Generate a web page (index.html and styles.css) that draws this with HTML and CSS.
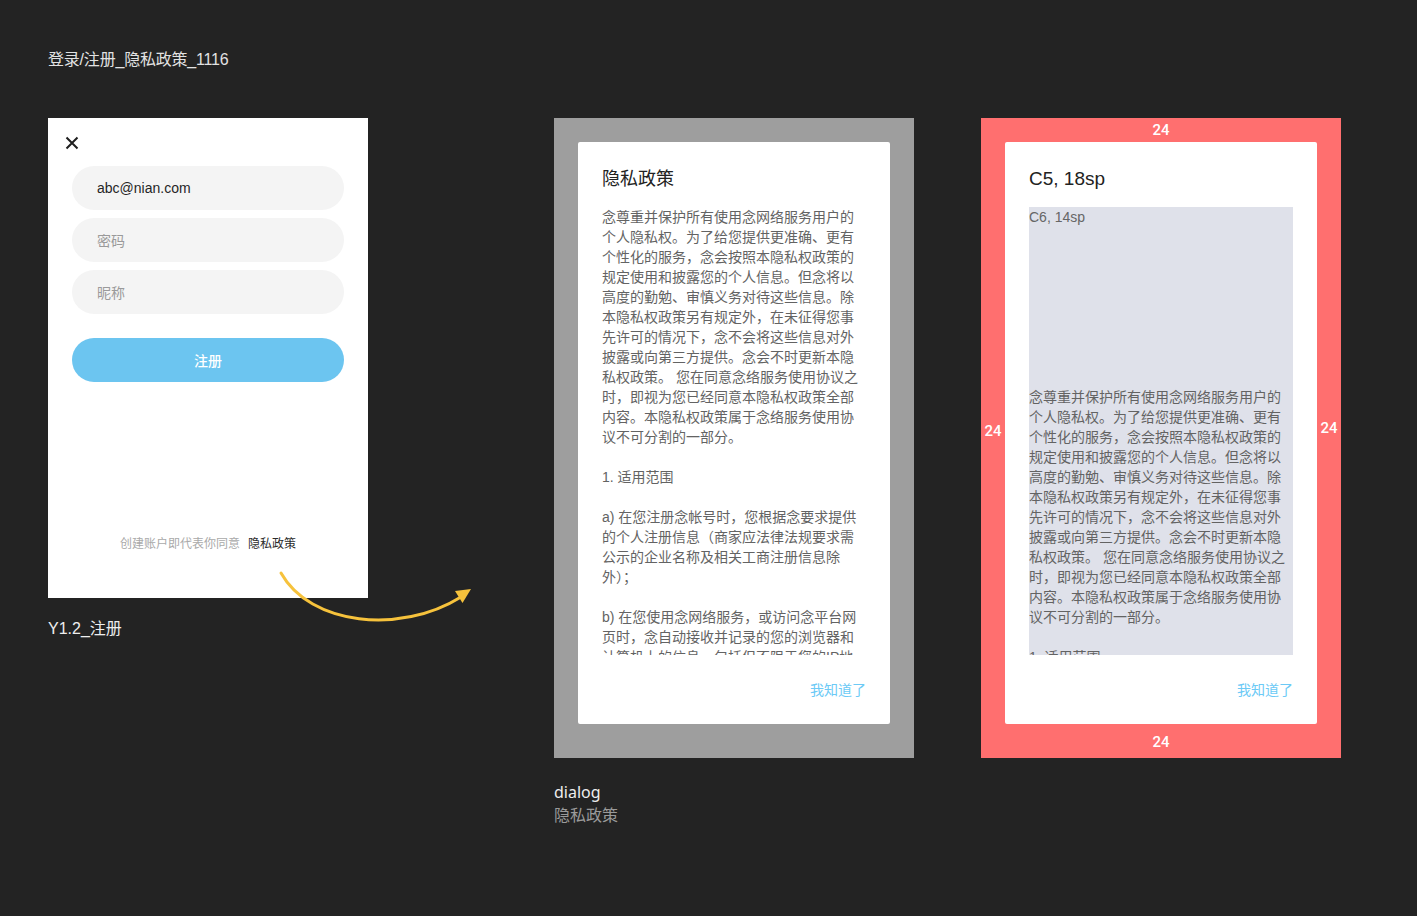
FILE: index.html
```html
<!DOCTYPE html>
<html lang="zh-CN">
<head>
<meta charset="utf-8">
<title>登录/注册_隐私政策_1116</title>
<link rel="stylesheet" href="styles.css">
</head>
<body>
<div class="page">
  <div class="page-title">登录/注册_隐私政策_1116</div>
  <div class="boards">
    <div class="column col-phone">
      <div class="phone">
        <div class="close">
          <svg width="24" height="24" viewBox="0 0 24 24"><path d="M6.5 6.5 L17.5 17.5 M17.5 6.5 L6.5 17.5" stroke="#1f1f1f" stroke-width="2" fill="none"/></svg>
        </div>
        <div class="field field-filled">abc@nian.com</div>
        <div class="field">密码</div>
        <div class="field">昵称</div>
        <div class="btn-primary">注册</div>
        <div class="agree"><span class="agree-muted">创建账户即代表你同意</span><span class="agree-link">隐私政策</span></div>
      </div>
      <div class="board-label">Y1.2_注册</div>
    </div>

    <div class="column col-dialog">
      <div class="frame frame-grey">
        <div class="dialog">
          <div class="dialog-title">隐私政策</div>
          <div class="dialog-body">
            <p>念尊重并保护所有使用念网络服务用户的个人隐私权。为了给您提供更准确、更有个性化的服务，念会按照本隐私权政策的规定使用和披露您的个人信息。但念将以高度的勤勉、审慎义务对待这些信息。除本隐私权政策另有规定外，在未征得您事先许可的情况下，念不会将这些信息对外披露或向第三方提供。念会不时更新本隐私权政策。 您在同意念络服务使用协议之时，即视为您已经同意本隐私权政策全部内容。本隐私权政策属于念络服务使用协议不可分割的一部分。</p>
            <p>1. 适用范围</p>
            <p>a) 在您注册念帐号时，您根据念要求提供的个人注册信息（商家应法律法规要求需公示的企业名称及相关工商注册信息除外）；</p>
            <p>b) 在您使用念网络服务，或访问念平台网页时，念自动接收并记录的您的浏览器和计算机上的信息，包括但不限于您的IP地</p>
          </div>
          <div class="dialog-actions"><span class="dialog-btn">我知道了</span></div>
        </div>
      </div>
      <div class="board-label label-dialog">dialog</div>
      <div class="board-sub">隐私政策</div>
    </div>

    <div class="column col-spec">
      <div class="frame frame-red">
        <div class="spec spec-top">24</div>
        <div class="spec spec-left">24</div>
        <div class="dialog">
          <div class="dialog-title title-latin">C5, 18sp</div>
          <div class="dialog-body body-spec">
            <div class="spec-note">C6, 14sp</div>
            <p class="spec-first">念尊重并保护所有使用念网络服务用户的个人隐私权。为了给您提供更准确、更有个性化的服务，念会按照本隐私权政策的规定使用和披露您的个人信息。但念将以高度的勤勉、审慎义务对待这些信息。除本隐私权政策另有规定外，在未征得您事先许可的情况下，念不会将这些信息对外披露或向第三方提供。念会不时更新本隐私权政策。 您在同意念络服务使用协议之时，即视为您已经同意本隐私权政策全部内容。本隐私权政策属于念络服务使用协议不可分割的一部分。</p>
            <p>1. 适用范围</p>
          </div>
          <div class="dialog-actions"><span class="dialog-btn">我知道了</span></div>
        </div>
        <div class="spec spec-right">24</div>
        <div class="spec spec-bottom">24</div>
      </div>
    </div>
  </div>

  <svg class="flow-arrow" width="220" height="80" viewBox="270 560 220 80">
    <path d="M281 573 C 310 625, 400 635, 461 597" stroke="#f6c23c" stroke-width="3" fill="none" stroke-linecap="round"/>
    <path d="M471 589 L462.5 603 L455 591 Z" fill="#f6c23c"/>
  </svg>
</div>
</body>
</html>
```

FILE: styles.css
```css
* {
  box-sizing: border-box;
}

html, body {
  margin: 0;
  padding: 0;
  background: #232323;
}

body {
  font-family: "Liberation Sans", "Noto Sans CJK SC", sans-serif;
  width: 1417px;
  height: 916px;
  overflow: hidden;
}

.page {
  position: relative;
  padding: 50px 0 0 48px;
  height: 916px;
}

.page-title {
  font-size: 16px;
  line-height: 20px;
  color: #e2e2e2;
  letter-spacing: -0.2px;
}

.boards {
  display: flex;
  align-items: flex-start;
  margin-top: 48px;
}

.column {
  display: flex;
  flex-direction: column;
}

.col-phone {
  width: 320px;
}

.col-dialog {
  width: 360px;
  margin-left: 186px;
}

.col-spec {
  width: 360px;
  margin-left: 67px;
}

/* phone card */
.phone {
  width: 320px;
  height: 480px;
  background: #ffffff;
  display: flex;
  flex-direction: column;
  padding: 13px 24px 45px;
}

.close {
  width: 24px;
  height: 24px;
  margin-left: -12px;
  margin-bottom: 11px;
}

.close svg {
  display: block;
}

.field {
  height: 44px;
  border-radius: 22px;
  background: #f4f4f4;
  margin-bottom: 8px;
  padding-left: 25px;
  padding-bottom: 1px;
  display: flex;
  align-items: center;
  font-size: 14px;
  color: #9a9a9a;
}

.field-filled {
  color: #262626;
  padding-bottom: 0;
}

.btn-primary {
  margin-top: 16px;
  height: 44px;
  border-radius: 22px;
  background: #6cc5f0;
  color: #ffffff;
  font-size: 14px;
  font-weight: 500;
  display: flex;
  align-items: center;
  justify-content: center;
}

.agree {
  margin-top: auto;
  display: flex;
  justify-content: center;
  gap: 8px;
  font-size: 12px;
  line-height: 18px;
}

.agree-muted {
  color: #a9a9a9;
}

.agree-link {
  color: #2b2b2b;
}

.board-label {
  margin-top: 21px;
  font-size: 16px;
  line-height: 20px;
  color: #eeeeee;
}

.label-dialog {
  margin-top: 22px;
  line-height: 24px;
  font-family: "Noto Sans", "Noto Sans CJK SC", sans-serif;
  font-size: 16px;
}

.board-sub {
  font-size: 16px;
  line-height: 24px;
  color: #9a9a9a;
}

/* frames */
.frame {
  width: 360px;
  height: 640px;
  padding: 24px;
}

.frame-grey {
  background: #9e9e9e;
}

.frame-red {
  background: #ff6f6f;
  display: grid;
  grid-template-columns: 24px 312px 24px;
  grid-template-rows: 24px 582px 1fr;
  padding: 0;
}

.spec {
  color: #ffffff;
  font-family: Roboto, "Liberation Sans", sans-serif;
  font-weight: 500;
  font-size: 15px;
  display: flex;
  align-items: center;
  justify-content: center;
}

.spec-top {
  grid-column: 1 / 4;
  grid-row: 1;
}

.spec-left {
  grid-column: 1;
  grid-row: 2;
  padding-bottom: 4px;
}

.spec-right {
  grid-column: 3;
  grid-row: 2;
  padding-bottom: 10px;
}

.spec-bottom {
  grid-column: 1 / 4;
  grid-row: 3;
  padding-top: 1px;
}

.frame-red .dialog {
  grid-column: 2;
  grid-row: 2;
}

.dialog {
  width: 312px;
  height: 582px;
  background: #ffffff;
  border-radius: 2px;
  padding: 25px 24px 24px;
  display: flex;
  flex-direction: column;
}

.dialog-title {
  font-size: 18px;
  line-height: 24px;
  color: #222222;
  margin-bottom: 16px;
}

.title-latin {
  font-size: 19px;
}

.dialog-body {
  height: 448px;
  overflow: hidden;
  font-size: 14px;
  line-height: 20px;
  color: #636363;
}

.dialog-body p {
  margin: 0 0 20px;
}

.dialog-body p:last-child {
  margin-bottom: 0;
}

.body-spec {
  background: #dfe1ea;
}

.spec-note {
  color: #666666;
}

.spec-first {
  margin-top: 160px !important;
}

.dialog-actions {
  margin-top: 25px;
  display: flex;
  justify-content: flex-end;
}

.dialog-btn {
  font-size: 14px;
  line-height: 20px;
  color: #6ccaf6;
}

.flow-arrow {
  position: absolute;
  left: 270px;
  top: 560px;
}
```
